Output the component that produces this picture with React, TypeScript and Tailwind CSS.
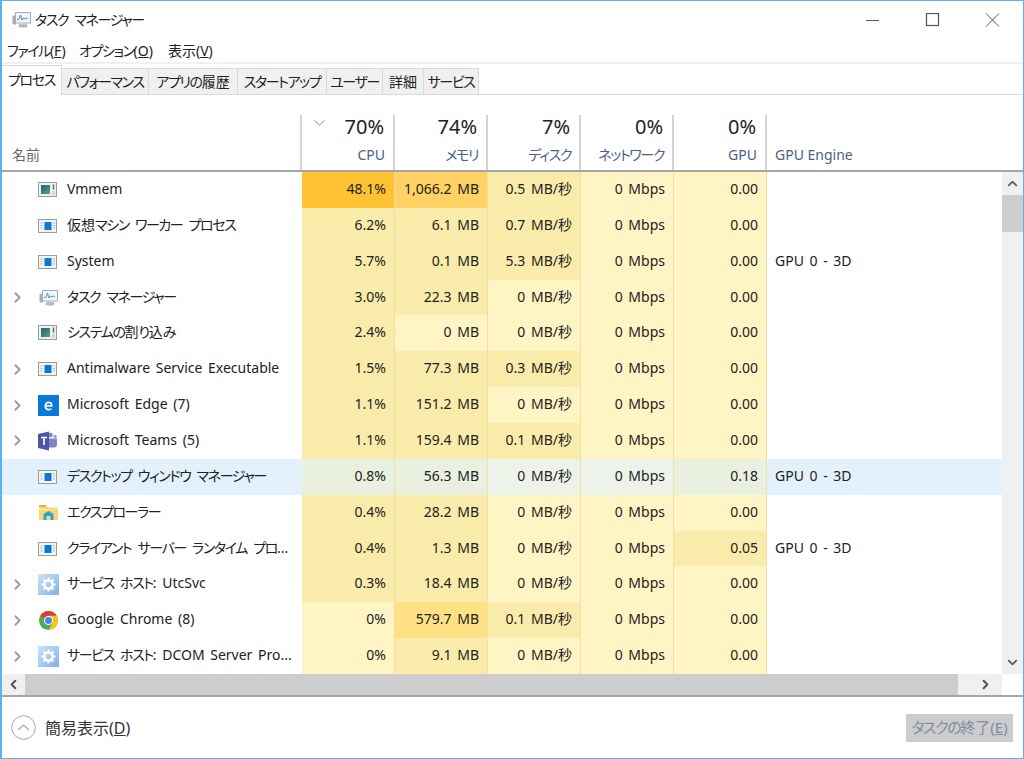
import { ChevronLeft, ChevronRight, ChevronUp, ChevronDown } from "lucide-react";

const FONT = "[font-family:'Noto_Sans','Noto_Sans_CJK_JP',sans-serif] [font-feature-settings:'palt'] whitespace-nowrap";

// kana in the original font is narrower than Noto's, tighten those runs only
function T({ s }: { s: string }) {
  const parts = s.split(/([\u3040-\u30ff]+(?: [\u3040-\u30ff]+)*)/);
  return (
    <>
      {parts.map((p, i) =>
        i % 2 === 1 ? (
          <span key={i} className="tracking-[-1.4px] [word-spacing:4px]">
            {p}
          </span>
        ) : (
          p
        ),
      )}
    </>
  );
}

function AppIcon() {
  return (
    <svg width="20" height="16" viewBox="0 0 20 16" aria-hidden="true">
      <rect x="0.5" y="1.5" width="18" height="13" fill="#f4f4f4" stroke="#9b9b9b" />
      <rect x="6.5" y="4" width="7" height="8" fill="#0a78d7" />
      <path d="M2.5 5h2M2.5 7.5h2M2.5 10h2M15 5h2M15 7.5h2M15 10h2" stroke="#b5b5b5" />
    </svg>
  );
}

function VmIcon() {
  return (
    <svg width="20" height="18" viewBox="0 0 20 18" aria-hidden="true">
      <defs>
        <linearGradient id="vmg" x1="0" y1="0" x2="1" y2="1">
          <stop offset="0" stopColor="#1d5f86" />
          <stop offset="1" stopColor="#5aa66a" />
        </linearGradient>
      </defs>
      <rect x="0.5" y="1.5" width="18" height="14" fill="#f0f0ee" stroke="#9b9b9b" />
      <rect x="3" y="4" width="9" height="9" fill="url(#vmg)" />
      <path d="M15.5 3.5v5" stroke="#3d7f6a" strokeWidth="1.4" />
      <path d="M14 11h3M14 13h3" stroke="#bdbdbd" />
    </svg>
  );
}

function TaskIcon() {
  return (
    <svg width="19" height="17" viewBox="0 0 19 17" aria-hidden="true">
      <path d="M0.5 5l3-1v10l-3-1z" fill="#a9adb1" />
      <rect x="3.5" y="1.5" width="15" height="10.5" fill="#f1f5f8" stroke="#a6acb2" />
      <path d="M5 9l2-1 1.5-4 1.5 5 1.5-2 1.5 1 1.5-1 1.5 1" fill="none" stroke="#3f8fd0" strokeWidth="1" />
      <path d="M7 13h8v2.5H7z" fill="#c3c6c9" />
      <ellipse cx="11" cy="15" rx="4.5" ry="1.5" fill="#b4b7ba" />
    </svg>
  );
}

function EdgeIcon() {
  return (
    <svg width="21" height="21" viewBox="0 0 21 21" aria-hidden="true">
      <rect width="21" height="21" fill="#0a78d7" />
      <path d="M7.4 10.9h6.4c0-2.2-1.2-3.5-3.1-3.5-2 0-3.4 1.5-3.4 3.6 0 2.2 1.5 3.6 3.6 3.6 1 0 1.8-.2 2.6-.7" fill="none" stroke="#fff" strokeWidth="1.7" />
    </svg>
  );
}

function TeamsIcon() {
  return (
    <svg width="20" height="20" viewBox="0 0 20 20" aria-hidden="true">
      <circle cx="12.5" cy="4" r="2.3" fill="#7b83c9" />
      <circle cx="17" cy="5.5" r="1.7" fill="#9aa0d8" />
      <path d="M11 7.5h8v6a3 3 0 0 1-3 3h-5z" fill="#7b83c9" />
      <path d="M0 3l11-2.500v19L0 17z" fill="#4f55a8" />
      <path d="M3 6.500h6M6 6.500v7.500" stroke="#fff" strokeWidth="1.700" />
    </svg>
  );
}

function FolderIcon() {
  return (
    <svg width="19" height="17" viewBox="0 0 19 17" aria-hidden="true">
      <path d="M0 1.500h7l2 2H19V16H0z" fill="#fbd66f" />
      <path d="M0 1h7v2H0z" fill="#e4b23e" />
      <path d="M0 5h19v1H0z" fill="#fde9a9" />
      <path d="M4.500 10l5-3 5 3v6h-3v-4h-4v4h-3z" fill="#2da2dc" />
    </svg>
  );
}

function GearIcon() {
  return (
    <svg width="21" height="21" viewBox="0 0 21 21" aria-hidden="true">
      <defs>
        <linearGradient id="grg" x1="0" y1="0" x2="1" y2="1">
          <stop offset="0" stopColor="#cfe3f6" />
          <stop offset="1" stopColor="#7fb2e6" />
        </linearGradient>
      </defs>
      <rect width="21" height="21" fill="url(#grg)" />
      <circle cx="10.500" cy="10.500" r="4" fill="none" stroke="#fff" strokeWidth="2.500" />
      <path d="M10.500 3.500v3M10.500 14.500v3M3.500 10.500h3M14.500 10.500h3M5.500 5.500l2.200 2.200M13.300 13.300l2.200 2.200M15.500 5.500l-2.200 2.200M7.700 13.300l-2.200 2.200" stroke="#fff" strokeWidth="2" />
    </svg>
  );
}

function ChromeIcon() {
  return (
    <svg width="19" height="19" viewBox="0 0 20 20" aria-hidden="true">
      <circle cx="10" cy="10" r="10" fill="#4aae4e" />
      <path d="M10 10L1.340 5A10 10 0 0 1 18.660 5H10z" fill="#dc3e33" />
      <path d="M10 5h8.660A10 10 0 0 1 10 20l4.330-7.500z" fill="#fbc318" />
      <circle cx="10" cy="10" r="4.800" fill="#fff" />
      <circle cx="10" cy="10" r="3.700" fill="#4a87ec" />
    </svg>
  );
}

const ICONS = {
  vm: VmIcon,
  app: AppIcon,
  task: TaskIcon,
  edge: EdgeIcon,
  teams: TeamsIcon,
  folder: FolderIcon,
  gear: GearIcon,
  chrome: ChromeIcon,
};

type Heat = "l" | "t" | "m" | "h" | "o" | "s" | "r";

const HEAT: Record<Heat, string> = {
  l: "bg-[#fff4c4]",
  t: "bg-[#f9ecaa]",
  m: "bg-[#ffe084]",
  h: "bg-[#ffd263]",
  o: "bg-[#ffc233]",
  s: "bg-[#eaf0df]",
  r: "bg-[#eef3ea]",
};

type Row = {
  name: string;
  icon: keyof typeof ICONS;
  arrow?: boolean;
  selected?: boolean;
  engine?: string;
  cells: [string, Heat][];
};

const NET: [string, Heat] = ["0 Mbps", "l"];
const ZERO: [string, Heat] = ["0.00", "l"];
const NODISK: [string, Heat] = ["0 MB/秒", "l"];

const ROWS: Row[] = [
  { name: "Vmmem", icon: "vm", cells: [["48.1%", "o"], ["1,066.2 MB", "h"], ["0.5 MB/秒", "t"], NET, ZERO] },
  { name: "仮想マシン ワーカー プロセス", icon: "app", cells: [["6.2%", "t"], ["6.1 MB", "t"], ["0.7 MB/秒", "t"], NET, ZERO] },
  { name: "System", icon: "app", engine: "GPU 0 - 3D", cells: [["5.7%", "t"], ["0.1 MB", "t"], ["5.3 MB/秒", "t"], NET, ZERO] },
  { name: "タスク マネージャー", icon: "task", arrow: true, cells: [["3.0%", "t"], ["22.3 MB", "t"], NODISK, NET, ZERO] },
  { name: "システムの割り込み", icon: "vm", cells: [["2.4%", "t"], ["0 MB", "l"], NODISK, NET, ZERO] },
  { name: "Antimalware Service Executable", icon: "app", arrow: true, cells: [["1.5%", "t"], ["77.3 MB", "t"], ["0.3 MB/秒", "t"], NET, ZERO] },
  { name: "Microsoft Edge (7)", icon: "edge", arrow: true, cells: [["1.1%", "t"], ["151.2 MB", "t"], NODISK, NET, ZERO] },
  { name: "Microsoft Teams (5)", icon: "teams", arrow: true, cells: [["1.1%", "t"], ["159.4 MB", "t"], ["0.1 MB/秒", "t"], NET, ZERO] },
  { name: "デスクトップ ウィンドウ マネージャー", icon: "app", selected: true, engine: "GPU 0 - 3D", cells: [["0.8%", "s"], ["56.3 MB", "s"], ["0 MB/秒", "r"], ["0 Mbps", "r"], ["0.18", "s"]] },
  { name: "エクスプローラー", icon: "folder", cells: [["0.4%", "t"], ["28.2 MB", "t"], NODISK, NET, ZERO] },
  { name: "クライアント サーバー ランタイム プロ...", icon: "app", engine: "GPU 0 - 3D", cells: [["0.4%", "t"], ["1.3 MB", "t"], NODISK, NET, ["0.05", "t"]] },
  { name: "サービス ホスト: UtcSvc", icon: "gear", arrow: true, cells: [["0.3%", "t"], ["18.4 MB", "t"], NODISK, NET, ZERO] },
  { name: "Google Chrome (8)", icon: "chrome", arrow: true, cells: [["0%", "l"], ["579.7 MB", "m"], ["0.1 MB/秒", "t"], NET, ZERO] },
  { name: "サービス ホスト: DCOM Server Pro...", icon: "gear", arrow: true, cells: [["0%", "l"], ["9.1 MB", "t"], NODISK, NET, ZERO] },
];

const COLS = "grid grid-cols-[300px_93px_93px_93px_93px_93px_1fr]";

const TABS = [
  { label: "パフォーマンス", w: "w-[87px]" },
  { label: "アプリの履歴", w: "w-[89px]" },
  { label: "スタートアップ", w: "w-[89px]" },
  { label: "ユーザー", w: "w-[56px]" },
  { label: "詳細", w: "w-[41px]" },
  { label: "サービス", w: "w-[55px]" },
];

function HeaderCell({ pct, label, sort }: { pct: string; label: string; sort?: boolean }) {
  return (
    <div className="relative flex flex-col items-end border-r-2 border-[#d4d4d4] pr-[8px]">
      {sort && (
        <svg className="absolute left-[12px] top-[5px]" width="11" height="6" viewBox="0 0 11 6" aria-hidden="true">
          <path d="M0.500 0.500l5 4.500 5-4.500" fill="none" stroke="#8c8c8c" />
        </svg>
      )}
      <div className="mt-[-2px] h-[27px] pr-[1px] text-[20px] leading-[27px] text-[#222]">{pct}</div>
      <div className="mt-[2px] text-[14px] leading-[26px] text-[#4d6082]">
        <T s={label} />
      </div>
    </div>
  );
}

function ProcessRow({ row }: { row: Row }) {
  const Icon = ICONS[row.icon];
  return (
    <div className={`${COLS} min-h-0 flex-1 [word-spacing:2px] ${row.selected ? "bg-[#e3f1fc]" : ""}`}>
      <div className="flex min-w-0 items-center">
        <div className="flex w-[30px] shrink-0 justify-center pl-[1px]">
          {row.arrow && <ChevronRight size={17} strokeWidth={2.6} className="text-[#9a9a9a]" />}
        </div>
        <div className="flex w-[35px] shrink-0 justify-center pl-[3px] pr-[6px]">
          <Icon />
        </div>
        <span className="pb-[2px] text-[14px] leading-[20px] text-[#222]">
          <T s={row.name} />
        </span>
      </div>
      {row.cells.map(([text, heat], i) => (
        <div
          key={i}
          className={`flex items-center justify-end border-r border-[#f1dfa4] pb-[2px] pr-[8px] text-[14px] leading-[20px] text-[#222] ${HEAT[heat]}`}
        >
          {text}
        </div>
      ))}
      <div className="flex items-center pb-[2px] pl-[8px] text-[14px] leading-[20px] text-[#222]">{row.engine}</div>
    </div>
  );
}

export default function App() {
  return (
    <div className={`${FONT} flex h-[759px] w-[1024px] flex-col overflow-hidden border border-l-2 border-[#5cb3ec] bg-white`}>
      {/* title bar */}
      <div className="flex h-[37px] shrink-0 items-center">
        <div className="ml-[10px] flex w-[23px]">
          <TaskIcon />
        </div>
        <span className="text-[14px] text-[#222]">
          <T s="タスク マネージャー" />
        </span>
        <div className="ml-auto flex items-center">
          <svg width="60" height="14" viewBox="0 0 60 14" aria-hidden="true">
            <path d="M23 7.500h13" stroke="#555" />
          </svg>
          <svg width="60" height="14" viewBox="0 0 60 14" aria-hidden="true">
            <rect x="23.500" y="0.500" width="12" height="12" fill="none" stroke="#555" strokeWidth="1.200" />
          </svg>
          <svg width="60" height="14" viewBox="0 0 60 14" aria-hidden="true">
            <path d="M23 0.500l13 13M36 0.500l-13 13" stroke="#555" />
          </svg>
        </div>
      </div>

      {/* menu */}
      <div className="flex h-[24px] shrink-0 items-center pl-[5px] text-[14px] text-[#222]">
        <span className="w-[72px]">
          <T s="ファイル" />(<span className="underline">F</span>)
        </span>
        <span className="w-[89px]">
          <T s="オプション" />(<span className="underline">O</span>)
        </span>
        <span>表示(<span className="underline">V</span>)</span>
      </div>
      <div className="h-[2px] shrink-0 bg-[#f0f0f0]" />

      {/* tabs */}
      <div className="flex h-[31px] shrink-0 items-end border-b border-[#d9d9d9] pt-[1px] text-[14px] text-[#222]">
        <div className="relative z-10 mb-[-1px] flex h-[30px] w-[60px] items-center justify-center border-r border-t border-[#d9d9d9] bg-white pb-[2px]">
          <T s="プロセス" />
        </div>
        {TABS.map((t) => (
          <div
            key={t.label}
            className={`flex h-[26px] items-center justify-center border-r border-t border-[#d9d9d9] bg-[#f0f0f0] ${t.w}`}
          >
            <T s={t.label} />
          </div>
        ))}
      </div>
      <div className="h-[20px] shrink-0" />

      {/* column header */}
      <div className={`${COLS} h-[57px] shrink-0 border-b-2 border-[#a5a5a5]`}>
        <div className="flex items-end border-r-2 border-[#d4d4d4] pb-[2px] pl-[10px] text-[14px] leading-[26px] text-[#666]">
          名前
        </div>
        <HeaderCell pct="70%" label="CPU" sort />
        <HeaderCell pct="74%" label="メモリ" />
        <HeaderCell pct="7%" label="ディスク" />
        <HeaderCell pct="0%" label="ネットワーク" />
        <HeaderCell pct="0%" label="GPU" />
        <div className="flex items-end pb-[2px] pl-[8px] text-[14px] leading-[26px] text-[#4d6082]">GPU Engine</div>
      </div>

      {/* rows + vertical scrollbar */}
      <div className="flex h-[502px] shrink-0">
        <div className="flex w-[1000px] flex-col">
          {ROWS.map((row) => (
            <ProcessRow key={row.name} row={row} />
          ))}
        </div>
        <div className="flex flex-1 flex-col items-center bg-[#f0f0f0]">
          <div className="flex h-[23px] w-full items-center justify-center">
            <ChevronUp size={15} strokeWidth={3} className="text-[#606060]" />
          </div>
          <div className="h-[37px] w-full bg-[#cdcdcd]" />
          <div className="mt-auto flex h-[23px] w-full items-center justify-center">
            <ChevronDown size={15} strokeWidth={3} className="text-[#606060]" />
          </div>
        </div>
      </div>

      {/* horizontal scrollbar */}
      <div className="flex h-[21px] shrink-0">
        <div className="flex w-[1000px] bg-[#f0f0f0]">
          <div className="flex w-[23px] items-center justify-center">
            <ChevronLeft size={15} strokeWidth={3} className="text-[#505050]" />
          </div>
          <div className="w-[933px] bg-[#cdcdcd]" />
          <div className="flex flex-1 items-center justify-center pr-[2px] pl-[12px]">
            <ChevronRight size={15} strokeWidth={3} className="text-[#505050]" />
          </div>
        </div>
      </div>

      {/* footer */}
      <div className="flex flex-1 items-center border-t-2 border-[#a5a5a5] pl-[9px] pr-[10px]">
        <svg width="25" height="25" viewBox="0 0 25 25" aria-hidden="true">
          <circle cx="12.500" cy="12.500" r="11.800" fill="#fff" stroke="#a8a8a8" />
          <path d="M7 15l5.500-5 5.500 5" fill="none" stroke="#a8a8a8" strokeWidth="1.200" />
        </svg>
        <span className="ml-[9px] text-[16px] text-[#333]">
          簡易表示(<span className="underline">D</span>)
        </span>
        <div className="ml-auto flex h-[28px] w-[107px] items-center justify-center bg-[#cccccc] text-[15px] text-[#838da5]">
          <T s="タスクの" />終了(<span className="underline">E</span>)
        </div>
      </div>
    </div>
  );
}
